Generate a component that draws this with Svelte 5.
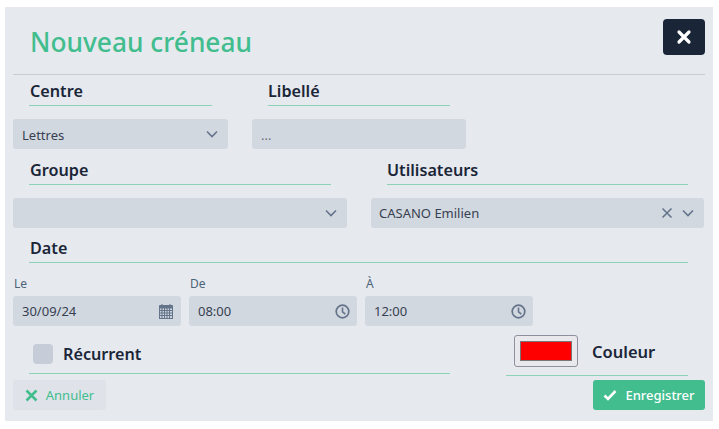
<script>
  let centre = "Lettres";
  let libelle = "";
  let user = "CASANO Emilien";
  let date = "30/09/24";
  let fields = [
    { label: "Le", value: date, icon: "cal" },
    { label: "De", value: "08:00", icon: "clock" },
    { label: "À", value: "12:00", icon: "clock" }
  ];
</script>

{#snippet chevron()}
  <svg class="chev" width="14" height="14" viewBox="0 0 14 14"><path d="M2 4.5 L7 9.5 L12 4.5" fill="none" stroke="#64748b" stroke-width="1.6" /></svg>
{/snippet}

<div class="modal">
  <header>
    <h1>Nouveau créneau</h1>
    <button class="close" aria-label="Fermer">
      <svg width="16" height="16" viewBox="0 0 16 16"><path d="M3 3 L13 13 M13 3 L3 13" stroke="#fff" stroke-width="3.2" stroke-linecap="round" /></svg>
    </button>
  </header>

  <div class="row r1">
    <div class="heading w183 inset">Centre</div>
    <div class="heading w182 libelle">Libellé</div>
  </div>
  <div class="row r2">
    <div class="field w215 low"><span>{centre}</span>{@render chevron()}</div>
    <div class="field w214 dots low"><span>{libelle || "..."}</span></div>
  </div>

  <div class="row r3">
    <div class="heading w302 inset">Groupe</div>
    <div class="heading w301 users">Utilisateurs</div>
  </div>
  <div class="row r4">
    <div class="field w334"><span></span>{@render chevron()}</div>
    <div class="field w333 sel2">
      <span>{user}</span>
      <svg class="clear" width="12" height="12" viewBox="0 0 12 12"><path d="M1.5 1.5 L10.5 10.5 M10.5 1.5 L1.5 10.5" stroke="#64748b" stroke-width="1.6" /></svg>
      {@render chevron()}
    </div>
  </div>

  <div class="heading date inset">Date</div>
  <div class="times">
    {#each fields as f}
      <div class="time">
        <div class="small">{f.label}</div>
        <div class="field" class:clock={f.icon === "clock"}>
          <span>{f.value}</span>
          {#if f.icon === "cal"}
            <svg width="14" height="15" viewBox="0 0 14 15">
              <path d="M0.5 1.5 H13.5 V4 H0.5 Z M3 0 V2 M11 0 V2" fill="#64748b" stroke="#64748b" />
              <path d="M0.5 4 V14.5 H13.5 V4 M0.5 6.5 H13.5 M0.5 9 H13.5 M0.5 11.5 H13.5 M3 4 V14.5 M5.5 4 V14.5 M8 4 V14.5 M10.5 4 V14.5" fill="none" stroke="#64748b" stroke-width="1.1" />
            </svg>
          {:else}
            <svg width="15" height="15" viewBox="0 0 15 15">
              <circle cx="7.5" cy="7.5" r="6.3" fill="none" stroke="#64748b" stroke-width="1.7" />
              <path d="M7.5 3.6 V7.8 L10.3 10.2" fill="none" stroke="#64748b" stroke-width="1.6" />
            </svg>
          {/if}
        </div>
      </div>
    {/each}
  </div>

  <div class="row bottom">
    <div class="heading recur">
      <span class="check"></span>
      <span>Récurrent</span>
    </div>
    <div class="heading colour">
      <span class="swatch"><span></span></span>
      <span>Couleur</span>
    </div>
  </div>

  <footer>
    <button class="cancel">
      <svg width="13" height="13" viewBox="0 0 13 13"><path d="M1.5 1.5 L11.5 11.5 M11.5 1.5 L1.5 11.5" stroke="#41bd8e" stroke-width="2.6" /></svg>
      Annuler
    </button>
    <button class="save">
      <svg width="14" height="12" viewBox="0 0 14 12"><path d="M1.5 6.5 L5 10 L12.5 2" fill="none" stroke="#fff" stroke-width="2.6" /></svg>
      Enregistrer
    </button>
  </footer>
</div>

<style>
  :global(body) {
    background: #fff;
    font-family: "Noto Sans", "Open Sans", sans-serif;
    color: #1a2638;
  }

  .modal {
    box-sizing: border-box;
    width: 708px;
    height: 414px;
    margin: 7px 0 0 5px;
    padding: 12px 8px 0;
    background: #e6e9ee;
  }

  header {
    display: flex;
    justify-content: space-between;
    height: 56px;
    border-bottom: 1px solid #c9ccd2;
    box-sizing: border-box;
  }

  h1 {
    margin: 5px 0 0 17px;
    font-size: 26.3px;
    line-height: 36px;
    font-weight: 500;
    color: #41bd8e;
  }

  .close {
    width: 42px;
    height: 36px;
    border: 0;
    border-radius: 4px;
    background: #1a2638;
    display: flex;
    align-items: center;
    justify-content: center;
  }

  .row {
    display: flex;
  }

  .heading {
    box-sizing: border-box;
    height: 31px;
    font-size: 16.2px;
    line-height: 32px;
    font-weight: 600;
    border-bottom: 1px solid #8fd3b6;
  }

  .inset { padding-left: 1px; }

  .r1 {
    padding-left: 16px;
    height: 44px;
  }

  .w183 { width: 183px; }
  .w182 { width: 182px; }
  .w302 { width: 302px; }
  .w301 { width: 301px; }
  .w215 { width: 215px; }
  .w214 { width: 214px; }
  .w334 { width: 334px; }
  .w333 { width: 333px; }

  .libelle { margin-left: 56px; }
  .users { margin-left: 56px; }

  .field {
    box-sizing: border-box;
    height: 30px;
    display: flex;
    align-items: center;
    justify-content: space-between;
    padding: 0 9px;
    border-radius: 3px;
    background: #d2d8e0;
    font-size: 13px;
    color: #374151;
  }

  .low span { padding-top: 2px; }

  .r2 { gap: 24px; }
  .dots { color: #6b7280; }

  .r3 {
    padding-left: 16px;
    margin-top: 5px;
    height: 44px;
  }

  .r4 { gap: 24px; }

  .sel2 { padding-left: 8px; }
  .sel2 span { flex: 1; }
  .clear { margin-right: 8px; }

  .date {
    width: 659px;
    margin: 4px 0 0 16px;
  }

  .times {
    display: flex;
    gap: 8px;
    margin-top: 12px;
  }

  .time { width: 168px; }
  .time .field { padding-right: 8px; }
  .time .field.clock { padding-right: 7px; }

  .small {
    height: 21px;
    padding-left: 1px;
    font-size: 12px;
    line-height: 18px;
    color: #4b6478;
  }

  .bottom {
    align-items: flex-start;
    margin-top: 9px;
    padding-left: 16px;
    height: 45px;
  }

  .recur {
    width: 421px;
    height: 39px;
    display: flex;
    align-items: center;
    gap: 10px;
    padding-left: 4px;
    line-height: 20px;
  }

  .check {
    width: 20px;
    height: 20px;
    border-radius: 4px;
    background: #c6cdd8;
  }

  .colour {
    width: 182px;
    height: 41px;
    margin-left: 56px;
    display: flex;
    align-items: flex-start;
    gap: 14px;
    padding-left: 8px;
    line-height: 33px;
    font-size: 16.5px;
  }

  .swatch {
    box-sizing: border-box;
    width: 64px;
    height: 32px;
    padding: 5px;
    border: 1px solid #8f8f9d;
    border-radius: 3px;
    background: #e9e9ed;
  }

  .swatch span {
    display: block;
    height: 20px;
    box-sizing: border-box;
    background: #f00;
    border: 1px solid #777;
  }

  footer {
    display: flex;
    justify-content: space-between;
  }

  footer button {
    height: 30px;
    border: 0;
    border-radius: 3px;
    display: flex;
    align-items: center;
    justify-content: center;
    gap: 8px;
    font-family: inherit;
    font-size: 13px;
  }

  .cancel {
    width: 93px;
    background: #dfe3e9;
    color: #41bd8e;
  }

  .save {
    width: 112px;
    background: #41bd8e;
    color: #fff;
    font-weight: 500;
  }
</style>
